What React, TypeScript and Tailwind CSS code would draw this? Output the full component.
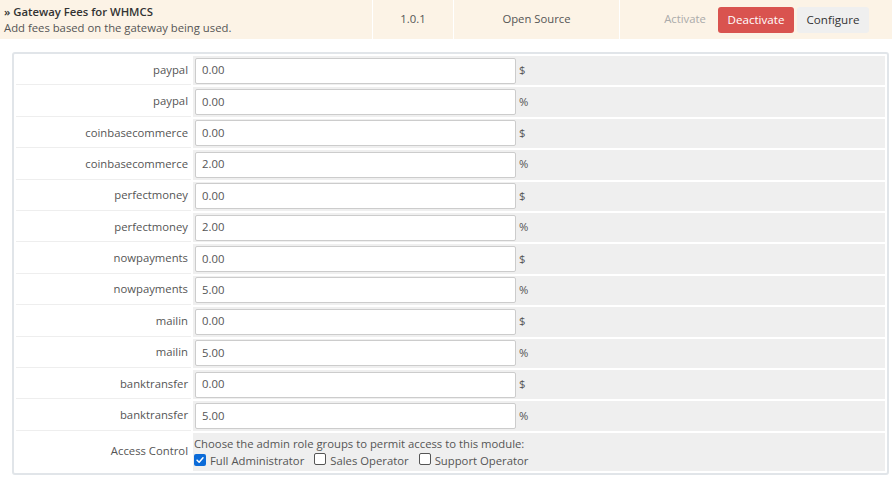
import React from "react";

const fields: { name: string; value: string; unit: string }[] = [
  { name: "paypal", value: "0.00", unit: "$" },
  { name: "paypal", value: "0.00", unit: "%" },
  { name: "coinbasecommerce", value: "0.00", unit: "$" },
  { name: "coinbasecommerce", value: "2.00", unit: "%" },
  { name: "perfectmoney", value: "0.00", unit: "$" },
  { name: "perfectmoney", value: "2.00", unit: "%" },
  { name: "nowpayments", value: "0.00", unit: "$" },
  { name: "nowpayments", value: "5.00", unit: "%" },
  { name: "mailin", value: "0.00", unit: "$" },
  { name: "mailin", value: "5.00", unit: "%" },
  { name: "banktransfer", value: "0.00", unit: "$" },
  { name: "banktransfer", value: "5.00", unit: "%" },
];

function Check({ checked }: { checked?: boolean }) {
  if (checked) {
    return (
      <span className="inline-flex h-[12px] w-[12px] items-center justify-center rounded-[2px] bg-[#0b6bd8]">
        <svg viewBox="0 0 12 12" className="h-[10px] w-[10px]">
          <path d="M2.5 6.2 L5 8.6 L9.6 3.4" fill="none" stroke="#fff" strokeWidth="1.8" strokeLinecap="round" strokeLinejoin="round" />
        </svg>
      </span>
    );
  }
  return <span className="inline-block h-[12px] w-[12px] rounded-[2px] border border-[#555] bg-white" />;
}

export default function App() {
  return (
    <div className="h-[477px] w-[892px] bg-white text-[11.3px] text-[#555]" style={{ fontFamily: '"Open Sans", "Liberation Sans", sans-serif' }}>
      {/* module row */}
      <div className="flex h-[39px] bg-[#fcf3e6]">
        <div className="flex w-[372px] flex-col justify-center pl-[4px] leading-[16px]">
          <div className="font-semibold text-[#333]">» Gateway Fees for WHMCS</div>
          <div>Add fees based on the gateway being used.</div>
        </div>
        <div className="flex w-[81px] items-center justify-center border-l border-white">1.0.1</div>
        <div className="flex w-[166px] items-center justify-center border-l border-white">Open Source</div>
        <div className="flex flex-1 items-center border-l border-white pl-[32px]">
          <span className="w-[66px] text-center text-[#aaa]">Activate</span>
          <button className="h-[26px] w-[76px] rounded-[3px] bg-[#d9534f] text-[11.6px] text-white">Deactivate</button>
          <button className="ml-[3px] h-[26px] w-[72px] rounded-[3px] bg-[#efefef] text-[11.6px] text-[#333]">Configure</button>
        </div>
      </div>

      {/* config panel */}
      <div className="mx-[12px] mt-[13px] w-[877px] rounded-[3px] border-2 border-[#e1e5e9] bg-white p-[2px]">
        <div className="flex flex-col gap-[2px]">
          {fields.map((f, i) => (
            <div key={i} className="flex h-[29.4px]">
              <div className="flex w-[175px] items-center justify-end border-b border-[#eee] pr-[3px]">{f.name}</div>
              <div className="ml-[2px] flex flex-1 items-center bg-[#efefef] pl-[2px]">
                <div className="flex h-[26px] w-[321px] items-center rounded-[2px] border border-[#ccc] bg-white pl-[6px]">{f.value}</div>
                <span className="ml-[3px]">{f.unit}</span>
              </div>
            </div>
          ))}
          <div className="flex h-[38px]">
            <div className="flex w-[175px] items-center justify-end pr-[3px]">Access Control</div>
            <div className="ml-[2px] flex flex-1 flex-col justify-center bg-[#efefef] pl-[1px] leading-[17px]">
              <div>Choose the admin role groups to permit access to this module:</div>
              <div className="flex items-center">
                <Check checked />
                <span className="ml-[4px]">Full Administrator</span>
                <span className="ml-[10px]"><Check /></span>
                <span className="ml-[4px]">Sales Operator</span>
                <span className="ml-[10px]"><Check /></span>
                <span className="ml-[4px]">Support Operator</span>
              </div>
            </div>
          </div>
        </div>
      </div>
    </div>
  );
}
